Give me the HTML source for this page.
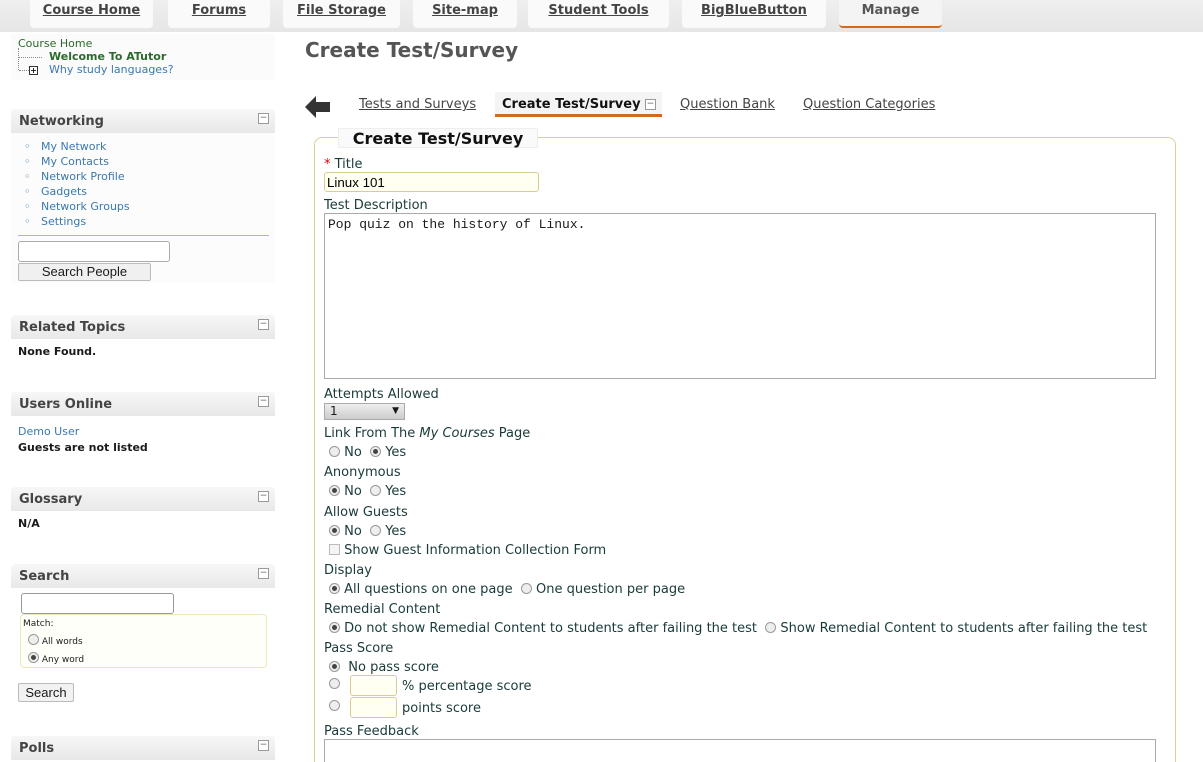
<!DOCTYPE html>
<html><head><style>
*{box-sizing:border-box}
html,body{margin:0;width:1203px;height:762px;overflow:hidden}
body{background:#fff;font-family:"DejaVu Sans","Liberation Sans",sans-serif;font-size:13px;color:#1a1a1a;position:relative}
.a{position:absolute;white-space:nowrap}
.topbar{position:absolute;left:0;top:0;width:1203px;height:32px;background:linear-gradient(#efefef,#e6e6e6)}
.tab{position:absolute;top:0;height:28px;background:#fafafa;border-radius:0 0 4px 4px;text-align:center;font-weight:bold;font-size:13px;color:#444;text-decoration:underline;line-height:21px}
.box{position:absolute;left:11px;width:264px;height:24px;background:linear-gradient(#f7f7f7,#e8e8e8);font-weight:bold;font-size:13px;color:#444;padding:5px 8px;border-radius:4px 4px 0 0}
.mn{position:absolute;right:6px;top:4px;width:11px;height:11px;border:1px solid #999;font-size:9px;line-height:8px;text-align:center;color:#666;background:#fff;font-weight:normal}
.lnk{color:#3a78b0;font-size:11px}
.rad{display:inline-block;width:11px;height:11px;border:1px solid #999;border-radius:50%;background:#eee;vertical-align:-1px;position:relative}
.rad.on::after{content:"";position:absolute;left:2px;top:2px;width:5px;height:5px;border-radius:50%;background:#444}
.lbl{font-size:13px;color:#1a3a3a}
input.t{position:absolute;border:1px solid #d8cd90;border-radius:3px;background:#fffff2;height:20px}
</style></head><body>
<div class="topbar"></div>
<div class="tab" style="left:30px;width:123px">Course Home</div>
<div class="tab" style="left:168px;width:102px">Forums</div>
<div class="tab" style="left:283px;width:117px">File Storage</div>
<div class="tab" style="left:413px;width:104px">Site-map</div>
<div class="tab" style="left:528px;width:141px">Student Tools</div>
<div class="tab" style="left:682px;width:144px">BigBlueButton</div>
<div class="tab" style="left:839px;width:103px;border-bottom:2px solid #d06b1e;text-decoration:none;color:#555;background:#f4f4f4">Manage</div>

<div class="a" style="left:11px;top:34px;width:264px;height:46px;background:#fbfbfb"></div>
<div class="a" style="left:18px;top:37px;font-size:11px;color:#2a6a2a">Course Home</div>
<div class="a" style="left:18px;top:48px;width:1px;height:22px;border-left:1px dotted #888"></div>
<div class="a" style="left:19px;top:57px;width:23px;border-top:1px dotted #888"></div>
<div class="a" style="left:19px;top:70px;width:10px;border-top:1px dotted #888"></div>
<div class="a" style="left:29px;top:66px;width:9px;height:9px;border:1px solid #333;font-size:8px;line-height:7px;text-align:center;font-weight:bold">+</div>
<div class="a" style="left:49px;top:50px;font-size:11px;font-weight:bold;color:#2a6a2a">Welcome To ATutor</div>
<div class="a lnk" style="left:49px;top:63px">Why study languages?</div>

<div class="box" style="top:109px">Networking<span class="mn">−</span></div>
<div class="a" style="left:11px;top:133px;width:264px;height:150px;background:#fcfcfc"></div>
<div class="a" style="left:24px;top:139px;line-height:15px">
<div class="lnk">◦&nbsp;&nbsp; My Network</div><div class="lnk">◦&nbsp;&nbsp; My Contacts</div><div class="lnk">◦&nbsp;&nbsp; Network Profile</div><div class="lnk">◦&nbsp;&nbsp; Gadgets</div><div class="lnk">◦&nbsp;&nbsp; Network Groups</div><div class="lnk">◦&nbsp;&nbsp; Settings</div></div>
<div class="a" style="left:18px;top:235px;width:251px;border-top:1px solid #b8c070"></div>
<input class="a" style="left:18px;top:241px;width:152px;height:21px;border:1px solid #aaa;border-radius:3px">
<div class="a" style="left:18px;top:263px;width:133px;height:18px;border:1px solid #bbb;background:#f0f0f0;border-radius:2px;text-align:center;font-family:'Liberation Sans',sans-serif;font-size:13px;line-height:16px">Search People</div>

<div class="box" style="top:315px">Related Topics<span class="mn">−</span></div>
<div class="a" style="left:18px;top:345px;font-size:11px;font-weight:bold">None Found.</div>
<div class="box" style="top:392px">Users Online<span class="mn">−</span></div>
<div class="a lnk" style="left:18px;top:425px">Demo User</div>
<div class="a" style="left:18px;top:441px;font-size:11px;font-weight:bold">Guests are not listed</div>
<div class="box" style="top:487px">Glossary<span class="mn">−</span></div>
<div class="a" style="left:18px;top:517px;font-size:11px;font-weight:bold">N/A</div>
<div class="box" style="top:564px">Search<span class="mn">−</span></div>
<input class="a" style="left:21px;top:593px;width:153px;height:21px;border:1px solid #999;border-radius:3px">
<div class="a" style="left:20px;top:614px;width:247px;height:54px;border:1px solid #eee8c0;border-radius:4px;background:#fffffa"></div>
<div class="a" style="left:23px;top:619px;font-size:9px">Match:</div>
<div class="a" style="left:28px;top:634px;font-size:9px"><span class="rad"></span> All words</div>
<div class="a" style="left:28px;top:652px;font-size:9px"><span class="rad on"></span> Any word</div>
<div class="a" style="left:18px;top:683px;width:56px;height:19px;border:1px solid #bbb;background:#f2f2f2;border-radius:2px;text-align:center;font-family:'Liberation Sans',sans-serif;font-size:13px;line-height:17px">Search</div>
<div class="box" style="top:736px">Polls<span class="mn">−</span></div>

<div class="a" style="left:305px;top:38px;font-size:20px;font-weight:bold;color:#555">Create Test/Survey</div>
<svg class="a" style="left:305px;top:96px" width="26" height="22"><path d="M0 11 L11 0 V6 H25 V16 H11 V22 Z" fill="#333"/></svg>
<div class="a" style="left:359px;top:97px;color:#444;text-decoration:underline">Tests and Surveys</div>
<div class="a" style="left:495px;top:92px;width:167px;height:25px;background:#f4f4f4;border-bottom:3px solid #d06b1e"></div>
<div class="a" style="left:502px;top:97px;font-weight:bold;color:#111">Create Test/Survey</div>
<div class="a" style="left:645px;top:99px;width:11px;height:11px;border:1px solid #999;font-size:9px;line-height:8px;text-align:center;color:#666;background:#fff">−</div>
<div class="a" style="left:680px;top:97px;color:#444;text-decoration:underline">Question Bank</div>
<div class="a" style="left:803px;top:97px;color:#444;text-decoration:underline">Question Categories</div>

<div class="a" style="left:314px;top:137px;width:862px;height:640px;border:1px solid #d8d098;border-radius:8px"></div>
<div class="a" style="left:338px;top:128px;width:200px;height:20px;background:#fafafa;border:1px solid #eee;font-size:16px;font-weight:bold;color:#111;text-align:center;line-height:19px">Create Test/Survey</div>

<div class="a lbl" style="left:324px;top:157px"><span style="color:#d00">*</span> Title</div>
<input class="t" style="left:324px;top:172px;width:215px" value="Linux 101">
<div class="a lbl" style="left:324px;top:198px">Test Description</div>
<div class="a" style="left:324px;top:213px;width:832px;height:166px;border:1px solid #aaa;font-family:'Liberation Mono','DejaVu Sans Mono',monospace;font-size:13px;padding:3px 3px">Pop quiz on the history of Linux.</div>
<div class="a lbl" style="left:324px;top:387px">Attempts Allowed</div>
<div class="a" style="left:324px;top:403px;width:81px;height:17px;border:1px solid #aaa;background:linear-gradient(#eee,#ccc);font-size:12px;padding:0 5px;line-height:15px">1<span style="position:absolute;right:5px;font-size:9px">▼</span></div>
<div class="a lbl" style="left:324px;top:426px">Link From The <i>My Courses</i> Page</div>
<div class="a lbl" style="left:329px;top:445px"><span class="rad"></span> No &nbsp;<span class="rad on"></span> Yes</div>
<div class="a lbl" style="left:324px;top:465px">Anonymous</div>
<div class="a lbl" style="left:329px;top:484px"><span class="rad on"></span> No &nbsp;<span class="rad"></span> Yes</div>
<div class="a lbl" style="left:324px;top:505px">Allow Guests</div>
<div class="a lbl" style="left:329px;top:524px"><span class="rad on"></span> No &nbsp;<span class="rad"></span> Yes</div>
<div class="a lbl" style="left:329px;top:543px"><span style="display:inline-block;width:11px;height:11px;border:1px solid #bbb;background:#f4f4f4;vertical-align:-1px"></span> Show Guest Information Collection Form</div>
<div class="a lbl" style="left:324px;top:563px">Display</div>
<div class="a lbl" style="left:329px;top:582px"><span class="rad on"></span> All questions on one page &nbsp;<span class="rad"></span> One question per page</div>
<div class="a lbl" style="left:324px;top:602px">Remedial Content</div>
<div class="a lbl" style="left:329px;top:621px"><span class="rad on"></span> Do not show Remedial Content to students after failing the test &nbsp;<span class="rad"></span> Show Remedial Content to students after failing the test</div>
<div class="a lbl" style="left:324px;top:641px">Pass Score</div>
<div class="a lbl" style="left:329px;top:660px"><span class="rad on"></span> &nbsp;No pass score</div>
<div class="a" style="left:329px;top:677px"><span class="rad"></span></div>
<input class="t" style="left:350px;top:675px;width:47px;height:21px">
<div class="a lbl" style="left:402px;top:679px">% percentage score</div>
<div class="a" style="left:329px;top:699px"><span class="rad"></span></div>
<input class="t" style="left:350px;top:697px;width:47px;height:21px">
<div class="a lbl" style="left:402px;top:701px">points score</div>
<div class="a lbl" style="left:324px;top:724px">Pass Feedback</div>
<div class="a" style="left:324px;top:739px;width:832px;height:40px;border:1px solid #aaa"></div>
</body></html>
